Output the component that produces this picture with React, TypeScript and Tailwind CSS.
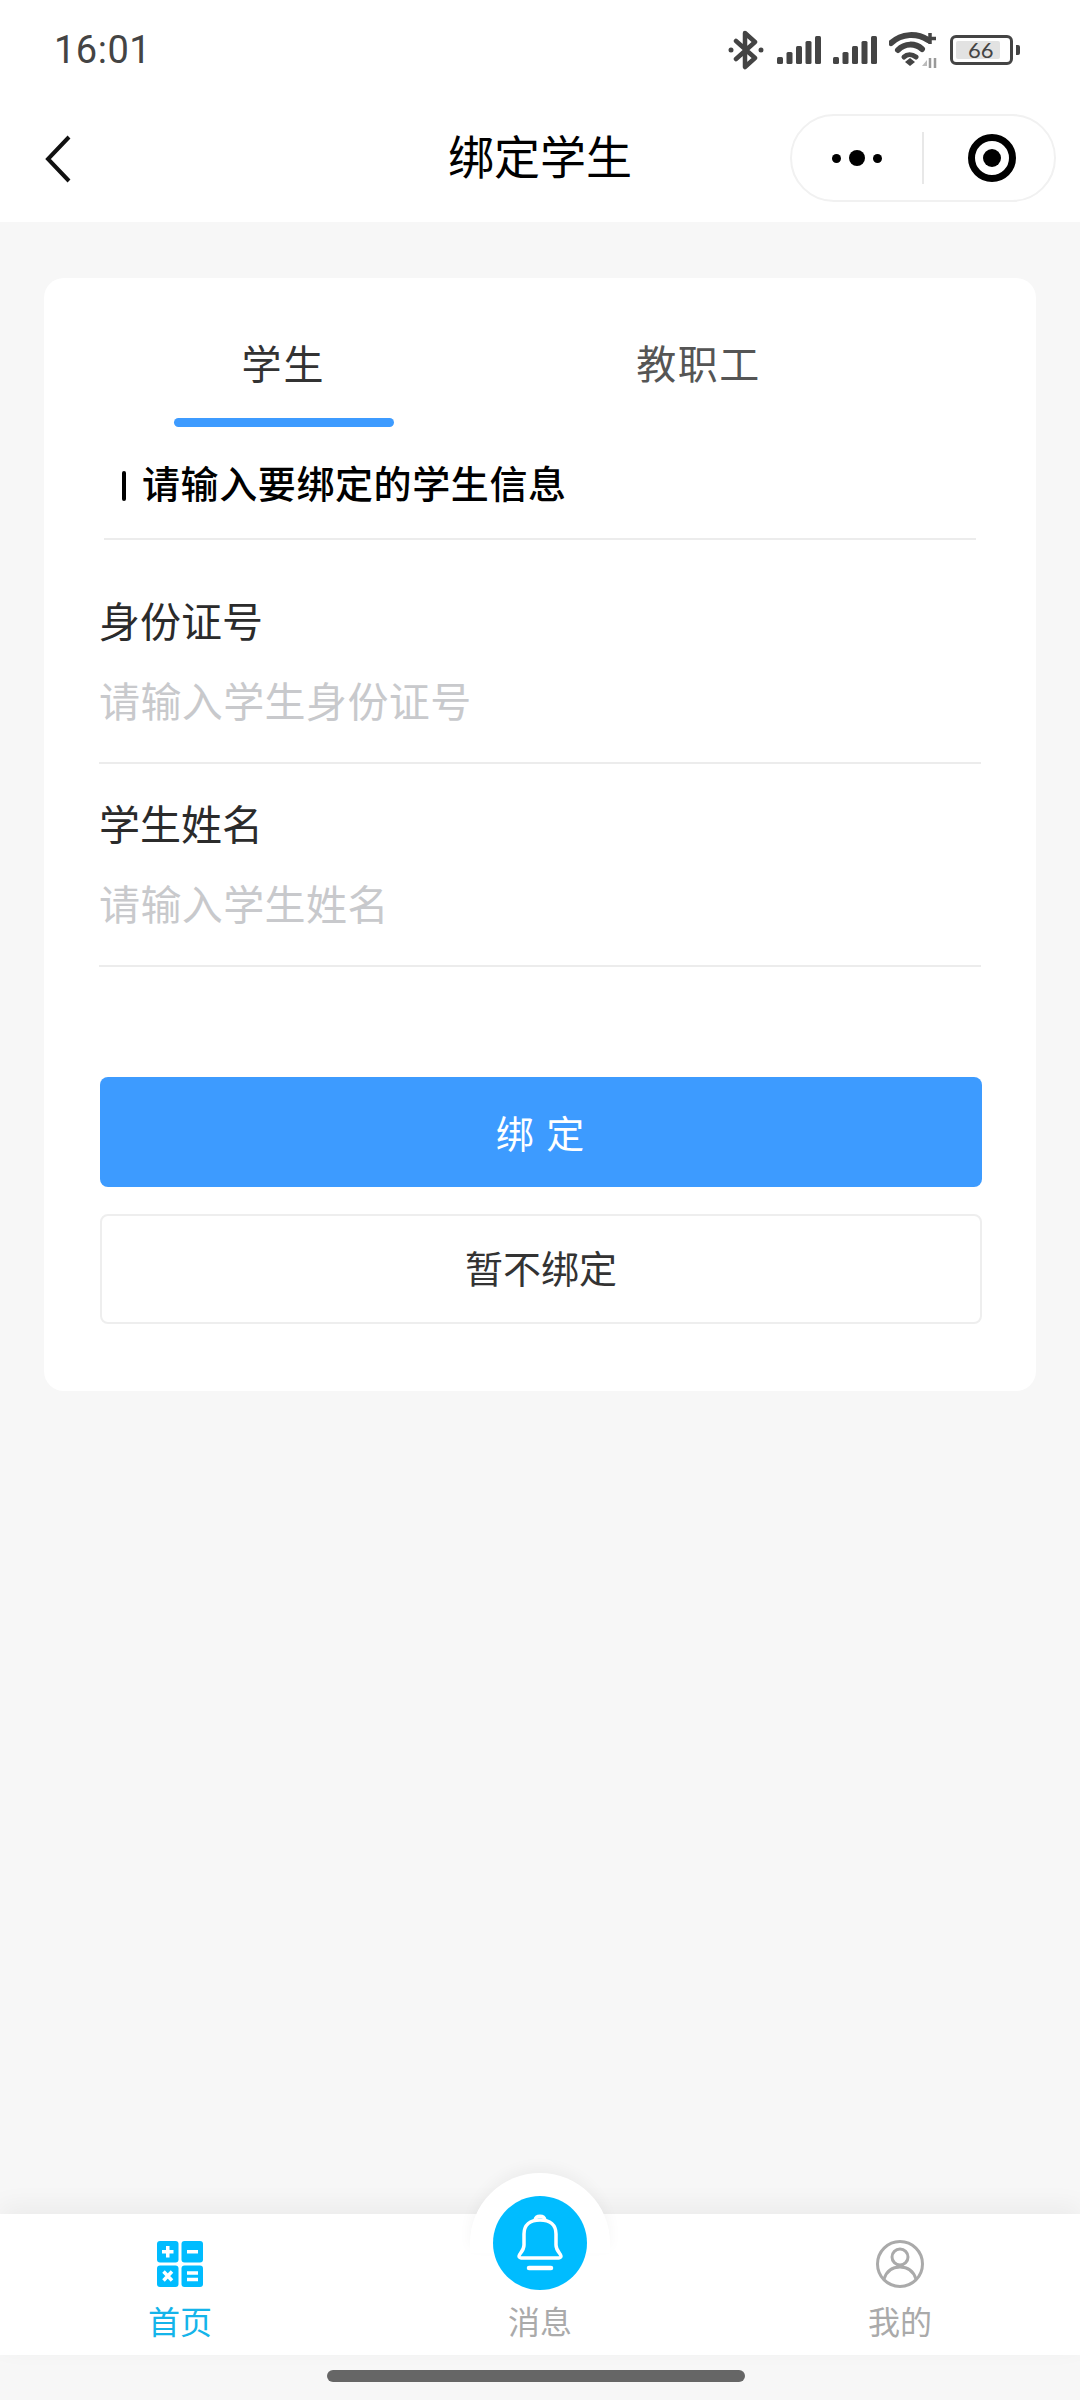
import React from "react";

const font = { fontFamily: '"Noto Sans CJK SC", "Noto Sans", sans-serif' };

function Signal() {
  return (
    <svg width="44" height="28" viewBox="0 0 44 28" fill="#444">
      <rect x="0" y="21" width="6" height="7" rx="1.5" />
      <rect x="9.5" y="16" width="6" height="12" rx="1.5" />
      <rect x="19" y="10" width="6" height="18" rx="1.5" />
      <rect x="28.5" y="5" width="6" height="23" rx="1.5" />
      <rect x="38" y="0" width="6" height="28" rx="1.5" />
    </svg>
  );
}

function StatusIcons() {
  return (
    <div className="flex items-center">
      <svg width="36" height="40" viewBox="0 0 36 40" fill="none" stroke="#444" strokeWidth="4.5" strokeLinejoin="round" strokeLinecap="round">
        <path d="M8 11 L27 28 L17 37 V3 L27 12 L8 29" />
        <circle cx="3" cy="20" r="2.5" fill="#444" stroke="none" />
        <circle cx="33" cy="20" r="2.5" fill="#444" stroke="none" />
      </svg>
      <div className="ml-[13px]"><Signal /></div>
      <div className="ml-[12px]"><Signal /></div>
      <svg className="ml-[12px]" width="50" height="36" viewBox="0 0 50 36" fill="none">
        <path d="M2 11 C13 1 28 1 39 8" stroke="#444" strokeWidth="6" strokeLinecap="round" />
        <path d="M9 18 C16 11 26 11 33 17" stroke="#444" strokeWidth="6" strokeLinecap="round" />
        <path d="M15 25 C18 22 23 22 27 25" stroke="#444" strokeWidth="5" strokeLinecap="round" />
        <path d="M16 30 L21 26 L26 30 L21 34 Z" fill="#444" />
        <path d="M41 1 V12 M35.5 6.5 H47" stroke="#444" strokeWidth="3.5" />
        <path d="M33 34 L38 28 V34 Z" fill="#bbb" />
        <path d="M41 26 V36 M46 26 V36" stroke="#999" strokeWidth="2.5" />
      </svg>
      <div className="relative ml-[11px] flex h-[30px] w-[63px] items-center rounded-[6px] border-[3px] border-[#444] p-[3px]">
        <div className="h-full w-[44px] rounded-[2px] bg-[#e2e2e2]" />
        <span className="absolute left-[15px] top-[-4px] text-[22px] leading-[32px] text-[#444]" style={{ fontFamily: "Lato, sans-serif" }}>66</span>
      </div>
      <div className="ml-[3px] h-[10px] w-[4px] rounded-r-[2px] bg-[#444]" />
    </div>
  );
}

function Field({ label, placeholder }: { label: string; placeholder: string }) {
  return (
    <div className="mx-[55px] h-[203px] border-b-2 border-[#ececec] pt-[31px]">
      <div className="text-[41px] leading-[54px] text-[#2b2b2b]">{label}</div>
      <div className="mt-[26px] text-[41px] leading-[54px] tracking-[0.4px] text-[#c8c9cc]">{placeholder}</div>
    </div>
  );
}

export default function App() {
  return (
    <div className="relative flex h-[2400px] w-[1080px] flex-col overflow-hidden bg-[#f7f7f7]" style={font}>
      <header className="h-[222px] shrink-0 bg-white">
        <div className="flex h-[100px] items-center justify-between pl-[54px] pr-[60px]">
          <span className="text-[38px] tracking-[0.5px] text-[#444]" style={{ fontFamily: "Roboto, sans-serif" }}>16:01</span>
          <StatusIcons />
        </div>
        <div className="relative flex h-[122px] items-center justify-center">
          <svg className="absolute left-[44px] top-[35px]" width="28" height="48" viewBox="0 0 28 48" fill="none" stroke="#111" strokeWidth="4">
            <path d="M25 2 L4 24 L25 46" />
          </svg>
          <span className="mt-[-14px] text-[46px] leading-[60px] text-black">绑定学生</span>
          <div className="absolute right-[24px] top-[14px] flex h-[88px] w-[266px] items-center rounded-full border-2 border-[#f1f1f1]">
            <div className="flex w-[130px] items-center justify-center gap-[8px]">
              <span className="h-[9px] w-[9px] rounded-full bg-black" />
              <span className="h-[16px] w-[16px] rounded-full bg-black" />
              <span className="h-[9px] w-[9px] rounded-full bg-black" />
            </div>
            <div className="h-[52px] w-[2px] bg-[#e8e8e8]" />
            <div className="flex flex-1 items-center justify-center pl-[6px]">
              <div className="flex h-[48px] w-[48px] items-center justify-center rounded-full border-[7px] border-black">
                <span className="h-[18px] w-[18px] rounded-full bg-black" />
              </div>
            </div>
          </div>
        </div>
      </header>

      <main className="mx-[44px] mt-[56px] h-[1113px] rounded-[20px] bg-white">
        <div className="flex h-[149px]">
          <div className="flex w-[413px] flex-col items-center pt-[57px]">
            <span className="ml-[66px] text-[40px] leading-[54px] tracking-[2px] text-[#333]">学生</span>
            <div className="ml-[66px] mt-[29px] h-[9px] w-[220px] rounded-full bg-[#3d9bff]" />
          </div>
          <div className="flex flex-1 justify-center pt-[57px] pr-[96px]">
            <span className="text-[40px] leading-[54px] tracking-[1.5px] text-[#555]">教职工</span>
          </div>
        </div>
        <div className="mx-[60px] h-[113px] border-b-2 border-[#ececec] pl-[18px] pt-[30px] text-[38px] font-medium leading-[50px] tracking-[0.6px] text-black">
          <span className="mr-[16px] inline-block h-[30px] w-[4px] translate-y-[3px] rounded-full bg-black" />
          请输入要绑定的学生信息
        </div>
        <div className="mt-[21px]">
          <Field label="身份证号" placeholder="请输入学生身份证号" />
          <Field label="学生姓名" placeholder="请输入学生姓名" />
        </div>
        <button className="mx-[56px] mt-[110px] block h-[110px] w-[882px] rounded-[8px] bg-[#3d9bff] pb-[2px] text-[38px] tracking-[2px] text-white">
          绑 定
        </button>
        <button className="mx-[56px] mt-[27px] block h-[110px] w-[882px] rounded-[8px] border-2 border-[#eeeeee] bg-white pb-[5px] text-[38px] text-[#333]">
          暂不绑定
        </button>
      </main>

      <nav className="relative mt-auto mb-[45px] flex h-[141px] bg-white shadow-[0_-8px_24px_rgba(0,0,0,0.05)]">
        <div className="flex w-[360px] flex-col items-center pt-[27px]">
          <svg width="46" height="46" viewBox="0 0 46 46">
            <rect x="0" y="0" width="21.5" height="21.5" rx="3" fill="#00bcff" />
            <rect x="24.5" y="0" width="21.5" height="21.5" rx="3" fill="#00bcff" />
            <rect x="0" y="24.5" width="21.5" height="21.5" rx="3" fill="#00bcff" />
            <rect x="24.5" y="24.5" width="21.5" height="21.5" rx="3" fill="#00bcff" />
            <path d="M5 10.75 H16.5 M10.75 5 V16.5" stroke="#fff" strokeWidth="3.5" />
            <path d="M30 10.75 H41" stroke="#fff" strokeWidth="3.5" />
            <path d="M6.5 30.5 L15 39.5 M15 30.5 L6.5 39.5" stroke="#fff" strokeWidth="3.5" />
            <path d="M30 32 H41 M30 38.5 H41" stroke="#fff" strokeWidth="3.5" />
          </svg>
          <span className="mt-[11px] text-[32px] leading-[44px] text-[#14b4ea]">首页</span>
        </div>
        <div className="flex w-[360px] flex-col items-center pt-[84px]">
          <span className="relative z-10 text-[32px] leading-[44px] text-[#aaa]">消息</span>
        </div>
        <div className="flex w-[360px] flex-col items-center pt-[25px]">
          <svg width="50" height="50" viewBox="0 0 50 50" fill="none" stroke="#aaa" strokeWidth="3">
            <circle cx="25" cy="25" r="22.5" />
            <circle cx="25" cy="18" r="8" />
            <path d="M9 40 C12 31 18 28 25 28 C32 28 38 31 41 40" />
          </svg>
          <span className="mt-[9px] text-[32px] leading-[44px] text-[#aaa]">我的</span>
        </div>
        <div className="absolute left-[470px] top-[-41px] flex h-[80px] w-[140px] justify-center rounded-t-full bg-white pt-[23px] shadow-[0_-6px_14px_rgba(0,0,0,0.04)]">
          <div className="flex h-[94px] w-[94px] shrink-0 items-center justify-center rounded-full bg-[#00bcff]">
            <svg width="48" height="60" viewBox="0 0 48 60" fill="none" stroke="#fff" strokeWidth="3.5" strokeLinecap="round" strokeLinejoin="round">
              <path d="M3 43 C3 41 8 38 8 32 V21 C8 12 14 7 24 7 C34 7 40 12 40 21 V32 C40 38 45 41 45 43 C45 44 44 45 43 45 H5 C4 45 3 44 3 43 Z" />
              <path d="M19 7 C20 2 28 2 29 7" />
              <path d="M13 55 H35" strokeWidth="4.5" />
            </svg>
          </div>
        </div>
      </nav>

      <div className="absolute bottom-[18px] left-[327px] h-[12px] w-[418px] rounded-full bg-[#666]" />
    </div>
  );
}
